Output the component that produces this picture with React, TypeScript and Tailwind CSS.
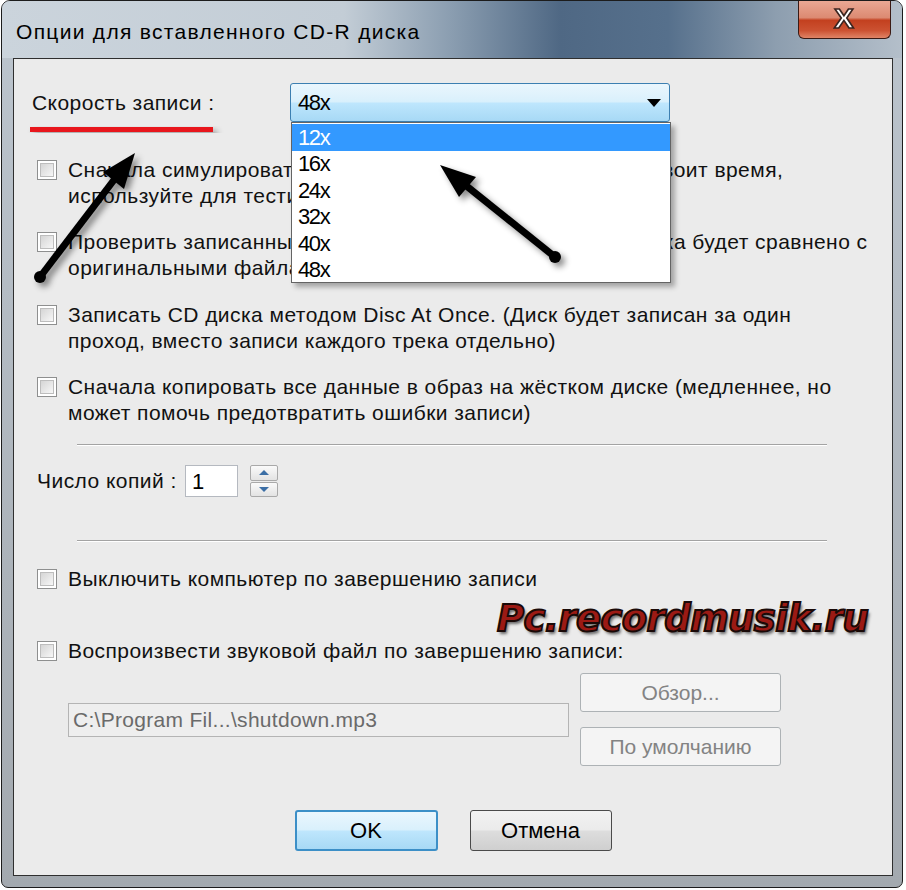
import type { ReactNode } from "react";

const font = "font-['Liberation_Sans',Arial,sans-serif]";

function CheckBox() {
  return (
    <div className="w-[20px] h-[20px] shrink-0 border border-[#8e8f8f] bg-white p-[2px]">
      <div className="w-full h-full border border-[#bdbdbd] bg-gradient-to-br from-[#d5d5d5] to-[#f7f7f7]" />
    </div>
  );
}

function CheckRow({ children, className = "" }: { children: ReactNode; className?: string }) {
  return (
    <div className={`flex items-start gap-[11px] ${className}`}>
      <div className="mt-[3px]">
        <CheckBox />
      </div>
      <p className="text-[21px] leading-[26px] tracking-[0.45px] text-[#111] whitespace-nowrap">{children}</p>
    </div>
  );
}

function Separator({ className = "" }: { className?: string }) {
  return (
    <div className={`ml-[40px] w-[750px] h-[2px] border-t border-[#a3a3a3] border-b border-b-white ${className}`} />
  );
}

const speeds = ["12x", "16x", "24x", "32x", "40x", "48x"];

export default function App() {
  return (
    <div className={`relative w-[906px] h-[890px] bg-white pl-[1px] ${font}`}>
      {/* window */}
      <div className="flex flex-col w-[902px] h-[888px] rounded-t-[9px] rounded-b-[7px] border border-[#1c1c1c] bg-gradient-to-b from-[#bcc5ce] to-[#a3a9af] overflow-hidden">
        {/* title bar */}
        <div className="relative h-[57px] flex justify-between bg-[linear-gradient(90deg,#cbd4dc_0%,#c3cdd6_38%,#8a9db0_50%,#4f6884_62%,#56708c_74%,#8d9eaf_86%,#b4bfca_100%)]">
          <div className="pl-[14px] pt-[15px] text-[21px] text-black tracking-[1.3px]">
            Опции для вставленного CD-R диска
          </div>
          <div className="mr-[11px] w-[93px] h-[38px] rounded-b-[6px] border border-t-0 border-[#3a1a14] bg-[linear-gradient(180deg,#eaa894_0%,#dc8a72_45%,#c3401f_52%,#cc5232_80%,#e08466_100%)] flex items-center justify-center">
            <span className="text-[27px] font-black text-white [-webkit-text-stroke:1.5px_#3b2520] leading-none scale-x-110">X</span>
          </div>
        </div>

        {/* client area */}
        <div className="flex-1 ml-[11px] mr-[9px] mb-[11px] border border-[#2f2f2f] bg-[#ebebeb] flex flex-col pl-[23px] pt-[24px]">
          {/* speed */}
          <div className="flex items-center h-[39px]">
            <span className="-ml-[5px] w-[258px] text-[21px] tracking-[0.45px] text-[#111]">Скорость записи :</span>
            <div className="relative">
              <div className="w-[380px] h-[39px] rounded-[3px] border border-[#3c7fb1] bg-[linear-gradient(180deg,#eaf6fd_0%,#d9f0fc_48%,#bee6fd_52%,#a7d9f5_100%)] flex items-center justify-between pl-[7px] pr-[8px]">
                <span className="text-[22px] tracking-[-1.4px] text-black">48x</span>
                <svg width="14" height="8" viewBox="0 0 14 8">
                  <path d="M0 0 L14 0 L7 8 Z" fill="#000" />
                </svg>
              </div>
              <div className="absolute left-[1px] top-full z-10 w-[380px] h-[161px] border border-[#646464] bg-white shadow-[4px_4px_5px_rgba(0,0,0,0.3)] flex flex-col pt-[1px]">
                {speeds.map((s, i) => (
                  <div
                    key={s}
                    className={`h-[26.5px] flex items-center pl-[6px] text-[22px] tracking-[-1.4px] ${
                      i === 0 ? "bg-[#3399ff] text-white" : "text-black"
                    }`}
                  >
                    {s}
                  </div>
                ))}
              </div>
            </div>
          </div>

          <CheckRow className="mt-[35px]">
            Сначала симулировать запись на диск (процесс записи удвоит время,
            <br />
            используйте для тестирования)
          </CheckRow>
          <CheckRow className="mt-[20px]">
            Проверить записанные данные (информация с нового диска будет сравнено с
            <br />
            оригинальными файлами)
          </CheckRow>
          <CheckRow className="mt-[21px]">
            Записать CD диска методом Disc At Once. (Диск будет записан за один
            <br />
            проход, вместо записи каждого трека отдельно)
          </CheckRow>
          <CheckRow className="mt-[20px]">
            Сначала копировать все данные в образ на жёстком диске (медленнее, но
            <br />
            может помочь предотвратить ошибки записи)
          </CheckRow>

          <Separator className="mt-[18px]" />

          {/* copies */}
          <div className="mt-[19px] flex items-center h-[32px]">
            <span className="w-[148px] text-[21px] tracking-[0.45px] text-[#111]">Число копий :</span>
            <div className="w-[53px] h-[32px] bg-white border border-[#b5b9c0] flex items-center pl-[6px] text-[22px] text-black">
              1
            </div>
            <div className="ml-[12px] w-[28px] h-[32px] flex flex-col gap-[1px]">
              {[0, 1].map((k) => (
                <div
                  key={k}
                  className="flex-1 border border-[#a9a9a9] rounded-[2px] bg-gradient-to-b from-[#fafafa] to-[#e3e3e3] flex items-center justify-center"
                >
                  <svg width="10" height="5" viewBox="0 0 10 5">
                    <path d={k === 0 ? "M0 5 L10 5 L5 0 Z" : "M0 0 L10 0 L5 5 Z"} fill="#3b6ea5" />
                  </svg>
                </div>
              ))}
            </div>
          </div>

          <Separator className="mt-[43px]" />

          <CheckRow className="mt-[24px]">Выключить компьютер по завершению записи</CheckRow>
          <CheckRow className="mt-[46px]">Воспроизвести звуковой файл по завершению записи:</CheckRow>

          {/* sound file */}
          <div className="mt-[9px] ml-[31px] flex items-center gap-[11px]">
            <div className="w-[501px] h-[34px] border border-[#b4b4b4] bg-[#eeeeee] flex items-center pl-[4px] text-[21px] tracking-[0.3px] text-[#6a6a6a]">
              C:\Program Fil...\shutdown.mp3
            </div>
            <div className="flex flex-col gap-[15px]">
              <div className="w-[201px] h-[39px] rounded-[3px] border border-[#adb2b5] bg-[#f4f4f4] flex items-center justify-center text-[21px] text-[#838383]">
                Обзор...
              </div>
              <div className="w-[201px] h-[39px] rounded-[3px] border border-[#adb2b5] bg-[#f4f4f4] flex items-center justify-center text-[21px] text-[#838383]">
                По умолчанию
              </div>
            </div>
          </div>

          {/* ok / cancel */}
          <div className="mt-[44px] -ml-[23px] flex justify-center gap-[32px]">
            <div className="w-[143px] h-[41px] rounded-[3px] border-2 border-[#3c8fc7] bg-[linear-gradient(180deg,#eaf6fd_0%,#d9f0fc_48%,#bee6fd_52%,#a7d9f5_100%)] flex items-center justify-center text-[22px] text-black">
              OK
            </div>
            <div className="w-[142px] h-[41px] rounded-[3px] border border-[#4a4a4a] bg-[linear-gradient(180deg,#f2f2f2_0%,#ebebeb_48%,#dddddd_52%,#cfcfcf_100%)] flex items-center justify-center text-[22px] text-black">
              Отмена
            </div>
          </div>
        </div>
      </div>

      {/* watermark */}
      <div className="absolute left-[497px] top-[591px] text-[37px] font-bold italic tracking-[-0.6px] text-[#9c1a14] font-['DejaVu_Sans',sans-serif] [-webkit-text-stroke:2px_#1a0a08] [text-shadow:2px_3px_3px_rgba(0,0,0,0.55)]">
        Pc.recordmusik.ru
      </div>

      {/* annotations */}
      <svg className="absolute left-0 top-0 pointer-events-none z-20" width="906" height="890" viewBox="0 0 906 890">
        <defs>
          <filter id="sh" x="-20%" y="-20%" width="140%" height="140%">
            <feDropShadow dx="4" dy="4" stdDeviation="3" floodColor="#000" floodOpacity="0.45" />
          </filter>
        </defs>
        <rect x="30" y="127" width="183" height="5" fill="#e8141a" filter="url(#sh)" />
        <g filter="url(#sh)" fill="#000" stroke="#000">
          <line x1="40" y1="277" x2="117" y2="176" strokeWidth="7" />
          <circle cx="40" cy="277" r="6" stroke="none" />
          <polygon points="135,153 124,189 103,172" stroke="none" />
          <line x1="555" y1="257" x2="464" y2="184" strokeWidth="7" />
          <circle cx="555" cy="257" r="6" stroke="none" />
          <polygon points="440,165 476,177 459,197" stroke="none" />
        </g>
      </svg>
    </div>
  );
}
